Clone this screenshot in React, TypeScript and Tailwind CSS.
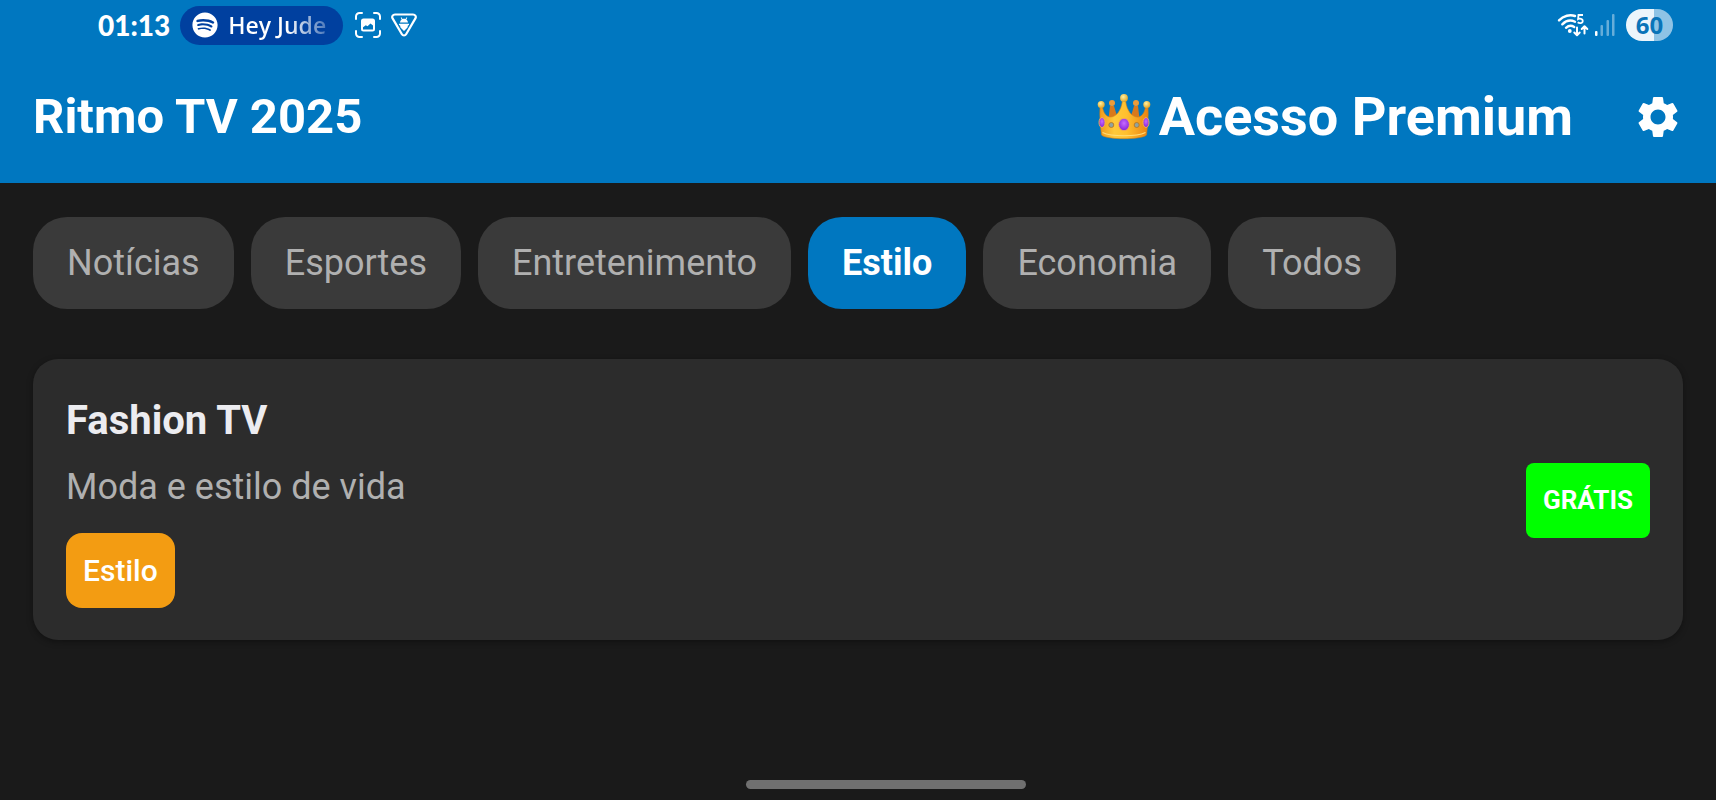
import { useState } from "react";
import { MdSettings } from "react-icons/md";
import { FaSpotify } from "react-icons/fa";

const categories = ["Notícias", "Esportes", "Entretenimento", "Estilo", "Economia", "Todos"];

const channels = [
  { name: "Fashion TV", description: "Moda e estilo de vida", category: "Estilo", badge: "GRÁTIS" },
];

function CaptureIcon() {
  return (
    <svg viewBox="0 0 26 26" className="size-[26px]" fill="none" stroke="currentColor" strokeWidth="2" strokeLinecap="round" aria-hidden="true">
      <path d="M1 7V4.5A3.5 3.5 0 0 1 4.500 1H7M19 1h2.500A3.500 3.500 0 0 1 25 4.500V7M25 19v2.500a3.500 3.500 0 0 1-3.500 3.500H19M7 25H4.500A3.500 3.500 0 0 1 1 21.500V19" />
      <path
        fill="currentColor"
        stroke="none"
        fillRule="evenodd"
        d="M8.500 6.500h9A2.500 2.500 0 0 1 20 9v8a2.500 2.500 0 0 1-2.500 2.500h-9A2.500 2.500 0 0 1 6 17V9A2.500 2.500 0 0 1 8.500 6.500ZM8 17.500h10v-4l-2.500-2-3 2.700-1.700-.9L8 15.300Z"
      />
    </svg>
  );
}

function ShieldIcon() {
  return (
    <svg viewBox="0 0 26 24" className="h-6 w-[26px]" fill="none" stroke="currentColor" aria-hidden="true">
      <path strokeWidth="2.200" strokeLinejoin="round" d="M4 1.500h18c2.200 0 3.500 2 2.400 3.900l-9.300 15.800c-1 1.700-3.200 1.700-4.200 0L1.600 5.400C.5 3.500 1.800 1.500 4 1.500Z" />
      <path fill="currentColor" stroke="none" d="M9 9.400C9.200 7.800 9.800 7 10.700 6.400L9.700 4.700l.8-.4 1 1.600c1-.3 2-.3 3 0l1-1.600.8.4-1 1.700C16.200 7 16.800 7.800 17 9.400ZM8 10.700h10v1.500h-1l-.5 2.300L13 18l-3.500-3.500-.5-2.300H8Z" />
    </svg>
  );
}

function WifiIcon() {
  return (
    <svg viewBox="0 0 33 24" className="h-6 w-[33px]" fill="none" stroke="currentColor" strokeLinecap="round" aria-hidden="true">
      <path strokeWidth="2.400" d="M2 7.400C6.500 2.600 13 1.200 18 3M5.300 11.300c3.600-3.600 8.500-4.600 12.700-2.500M9 14.800c2.500-2.300 5.600-2.500 8.200-.8" />
      <circle cx="12.800" cy="18" r="1.900" fill="currentColor" stroke="none" />
      <path strokeWidth="1.800" strokeLinecap="butt" d="M26 2h-4.500l-.4 4.100c1.500-.9 4.700-.6 4.700 1.800 0 2.500-3.300 2.900-5.100 1.400" />
      <path strokeWidth="2" strokeLinejoin="round" d="M20 14.500v7.500M17.300 19.500l2.700 2.800 2.700-2.800M27.500 20.500V13.500M24.700 16l2.800-2.800 2.800 2.800" />
    </svg>
  );
}

function SignalIcon() {
  return (
    <svg viewBox="0 0 22 22" className="size-[22px]" fill="currentColor" aria-hidden="true">
      <rect x="1" y="17" width="2.500" height="5" rx="1" />
      <g opacity=".4">
        <rect x="6.500" y="11" width="2.500" height="11" rx="1" />
        <rect x="12.500" y="6" width="2.500" height="16" rx="1" />
        <rect x="18" y="0" width="2.500" height="22" rx="1" />
      </g>
    </svg>
  );
}

function CrownIcon() {
  return (
    <svg viewBox="0 0 54 46" className="h-[46px] w-[54px]" aria-hidden="true">
      <defs>
        <linearGradient id="crown-gold" x1="0" x2="1" y1="0" y2="0">
          <stop offset="0" stopColor="#f09a1c" />
          <stop offset=".3" stopColor="#ffc93a" />
          <stop offset=".55" stopColor="#ffc02e" />
          <stop offset="1" stopColor="#e98412" />
        </linearGradient>
        <radialGradient id="crown-pearl" cx=".4" cy=".35" r=".7">
          <stop offset="0" stopColor="#fff2a0" />
          <stop offset="1" stopColor="#e0a020" />
        </radialGradient>
        <radialGradient id="crown-gem" cx=".5" cy=".4" r=".6">
          <stop offset="0" stopColor="#c76bff" />
          <stop offset="1" stopColor="#8420d8" />
        </radialGradient>
      </defs>
      <path fill="#d9791b" d="M13 12h4l5 17H11ZM37 12h4l2 17H32Z" />
      <circle cx="15" cy="9" r="3" fill="#eb9b3a" />
      <circle cx="39" cy="9" r="3" fill="#eb9b3a" />
      <path
        fill="url(#crown-gold)"
        stroke="#cf7c18"
        strokeWidth=".6"
        d="M3 13h2.500c1 6 3.500 9.500 7.500 10 6.500 0 11-6.500 12.300-15.500h3.400C30 16.500 34.500 23 41 23c4-.5 6.500-4 7.500-10H51c.6 9-.4 19-1.500 28-5 5-40 5-45 0C3.400 32 2.400 22 3 13Z"
      />
      <path fill="none" stroke="#ffdd78" strokeWidth="1.200" d="M5.500 38.500c9 4.300 34 4.300 43 0" />
      <circle cx="4.200" cy="10.500" r="3.500" fill="url(#crown-pearl)" />
      <circle cx="49.800" cy="10.500" r="3.500" fill="url(#crown-pearl)" />
      <circle cx="27" cy="4" r="3.900" fill="url(#crown-pearl)" />
      <g stroke="#f8b54a" strokeWidth=".9">
        <ellipse cx="27" cy="30.500" rx="5.400" ry="6.200" fill="url(#crown-gem)" />
        <ellipse cx="5" cy="28.500" rx="3" ry="5" fill="url(#crown-gem)" />
        <ellipse cx="49" cy="28.500" rx="3" ry="5" fill="url(#crown-gem)" />
      </g>
      <g fill="#8fa3a0" stroke="#b5731c" strokeWidth=".8">
        <circle cx="14.300" cy="31" r="2.500" />
        <circle cx="39.700" cy="31" r="2.500" />
      </g>
    </svg>
  );
}

function StatusBar() {
  return (
    <div className="flex h-[50px] items-center justify-between pr-[43px] pl-[98px] font-['Lato',sans-serif]">
      <div className="flex items-center">
        <span className="text-[28px] leading-8 font-black">01:13</span>
        <div className="ml-2.5 flex h-[39px] w-[163px] items-center gap-2.5 rounded-full bg-[#00409f] pl-3">
          <FaSpotify className="size-[26px]" aria-hidden="true" />
          <span className="bg-linear-to-r from-white from-60% to-white/30 bg-clip-text font-['Open_Sans',sans-serif] text-[23px] font-semibold text-transparent">
            Hey Jude
          </span>
        </div>
        <div className="ml-3 flex items-center gap-2.5">
          <CaptureIcon />
          <ShieldIcon />
        </div>
      </div>
      <div className="flex items-center">
        <WifiIcon />
        <span className="ml-1">
          <SignalIcon />
        </span>
        <span className="ml-2.5 flex h-8 w-[47px] items-center justify-center rounded-full bg-linear-to-r from-[#ecf5fb] from-60% to-[#8fc3e5] to-60% font-['Open_Sans',sans-serif] text-2xl leading-8 font-bold text-[#0a74b8]">
          60
        </span>
      </div>
    </div>
  );
}

export default function App() {
  const [active, setActive] = useState("Estilo");

  return (
    <div className="flex min-h-screen flex-col bg-[#1a1a1a] font-['Roboto',sans-serif]">
      <header className="bg-[#0077c0] text-white">
        <StatusBar />
        <div className="flex h-[133px] items-center justify-between px-[33px]">
          <h1 className="text-[49px] leading-none font-bold">Ritmo TV 2025</h1>
          <div className="flex items-center gap-[60px]">
            <a href="#premium" className="flex items-center gap-2 text-[54px] leading-none font-bold">
              <CrownIcon />
              Acesso Premium
            </a>
            <button type="button" aria-label="Configurações">
              <MdSettings className="size-[50px]" />
            </button>
          </div>
        </div>
      </header>

      <main className="px-[33px] pt-[34px]">
        <nav className="flex gap-[17px]" aria-label="Categorias">
          {categories.map((category) => (
            <button
              key={category}
              type="button"
              aria-pressed={active === category}
              onClick={() => setActive(category)}
              className={
                active === category
                  ? "h-[92px] rounded-[34px] bg-[#0077c0] px-[34px] text-[36px] font-bold text-white"
                  : "h-[92px] rounded-[34px] bg-[#3a3a3a] px-[34px] text-[36px] text-[#b0b0b0]"
              }
            >
              {category}
            </button>
          ))}
        </nav>

        <ul className="mt-[50px]">
          {channels.map((channel) => (
            <li
              key={channel.name}
              className="flex items-center justify-between rounded-[25px] bg-[#2c2c2c] px-[33px] pt-[34px] pb-8 shadow-[0_2px_6px_rgba(0,0,0,0.35)]"
            >
              <div className="flex flex-col items-start">
                <h2 className="text-[40px] leading-[56px] font-bold text-[#ececf0]">{channel.name}</h2>
                <p className="mt-2 text-[36px] leading-[60px] text-[#b0b0b0]">{channel.description}</p>
                <span className="mt-4 flex h-[75px] items-center rounded-2xl bg-[#f39c12] px-[17px] text-[30px] font-medium text-white">
                  {channel.category}
                </span>
              </div>
              <span className="flex h-[75px] items-center rounded-lg bg-[#00ff00] px-[17px] text-[26px] font-bold text-white">
                {channel.badge}
              </span>
            </li>
          ))}
        </ul>
      </main>

      <footer className="mt-auto flex justify-center pb-[11px] pl-[55px]">
        <div className="h-[9px] w-[280px] rounded-full bg-[#707070]" />
      </footer>
    </div>
  );
}
